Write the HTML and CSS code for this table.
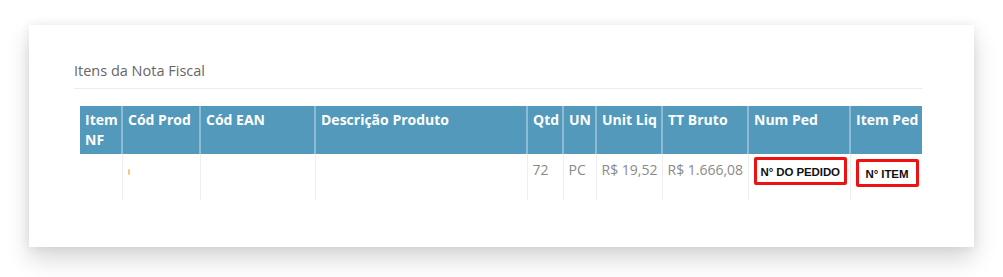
FILE: index.html
```html
<!DOCTYPE html>
<html lang="pt-BR">
<head>
<meta charset="utf-8">
<title>Itens da Nota Fiscal</title>
<link rel="stylesheet" href="styles.css">
</head>
<body>
<section class="card">
  <h3 class="card-title">Itens da Nota Fiscal</h3>
  <hr class="divider">
  <table class="items">
    <colgroup>
      <col style="width:42px"><col style="width:78px"><col style="width:115px"><col style="width:212px">
      <col style="width:36px"><col style="width:33px"><col style="width:66px"><col style="width:86px">
      <col style="width:102px"><col style="width:72px">
    </colgroup>
    <thead>
      <tr>
        <th class="wrap">Item NF</th>
        <th>Cód Prod</th>
        <th>Cód EAN</th>
        <th>Descrição Produto</th>
        <th>Qtd</th>
        <th>UN</th>
        <th>Unit Liq</th>
        <th>TT Bruto</th>
        <th>Num Ped</th>
        <th>Item Ped</th>
      </tr>
    </thead>
    <tbody>
      <tr>
        <td></td>
        <td><span class="code-mark"></span></td>
        <td></td>
        <td></td>
        <td>72</td>
        <td>PC</td>
        <td>R$&nbsp;19,52</td>
        <td>R$&nbsp;1.666,08</td>
        <td class="tag-cell"><span class="tag tag-order">N° DO PEDIDO</span></td>
        <td class="tag-cell"><span class="tag tag-item">N° ITEM</span></td>
      </tr>
    </tbody>
  </table>
</section>
</body>
</html>
```

FILE: styles.css
```css
html, body {
  margin: 0;
  padding: 0;
  background: #ffffff;
}

body {
  box-sizing: border-box;
  min-height: 277px;
  padding: 25px 0 30px 29px;
  font-family: "Open Sans", "Noto Sans", Arial, sans-serif;
  font-size: 14px;
  line-height: 20px;
  color: #888888;
}

.card {
  box-sizing: border-box;
  width: 945px;
  height: 222px;
  padding: 36px 52px 0 45px;
  background: #ffffff;
  box-shadow: 0 12px 22px rgba(0, 0, 0, 0.16), 0 0 10px rgba(0, 0, 0, 0.07);
}

.card-title {
  margin: 0;
  font-size: 14.5px;
  line-height: 20px;
  font-weight: 400;
  color: #666666;
}

.divider {
  margin: 7px 0 0 0;
  border: 0;
  border-top: 1px solid #ececec;
  height: 0;
}

.items {
  margin: 17px 0 0 6px;
  border-collapse: collapse;
  table-layout: fixed;
  width: 842px;
}

.items th {
  height: 48px;
  box-sizing: border-box;
  padding: 4px 4px 4px 5px;
  background: #5299bb;
  color: #ffffff;
  font-weight: 700;
  text-align: left;
  vertical-align: top;
  white-space: nowrap;
  overflow: hidden;
  border-left: 2px solid #8dbcd3;
}

.items th.wrap {
  white-space: normal;
}

.items th:first-child {
  border-left: 0;
}

.items td {
  height: 46px;
  box-sizing: border-box;
  padding: 6px 5px 0;
  vertical-align: top;
  white-space: nowrap;
  border-left: 1px solid #eeeeee;
  color: #8a8a8a;
}

.items td:first-child {
  border-left: 0;
}

.items td.tag-cell {
  padding: 3px 5px 0;
}

.code-mark {
  display: inline-block;
  width: 2px;
  height: 6px;
  margin: 5px 0 0 0;
  border-radius: 1px;
  background: #f6c97a;
}

.tag {
  display: inline-flex;
  align-items: center;
  box-sizing: border-box;
  height: 28px;
  padding: 1px 3px 0 4px;
  border: 3px solid #ee1111;
  border-radius: 2px;
  background: #ffffff;
  color: #111111;
  font-family: "Liberation Sans", Arial, sans-serif;
  font-size: 11.5px;
  font-weight: 700;
  letter-spacing: -0.1px;
}

.tag-order {
  width: 93px;
}

.tag-item {
  width: 63px;
  margin-top: 2px;
  padding-left: 7px;
}
```
